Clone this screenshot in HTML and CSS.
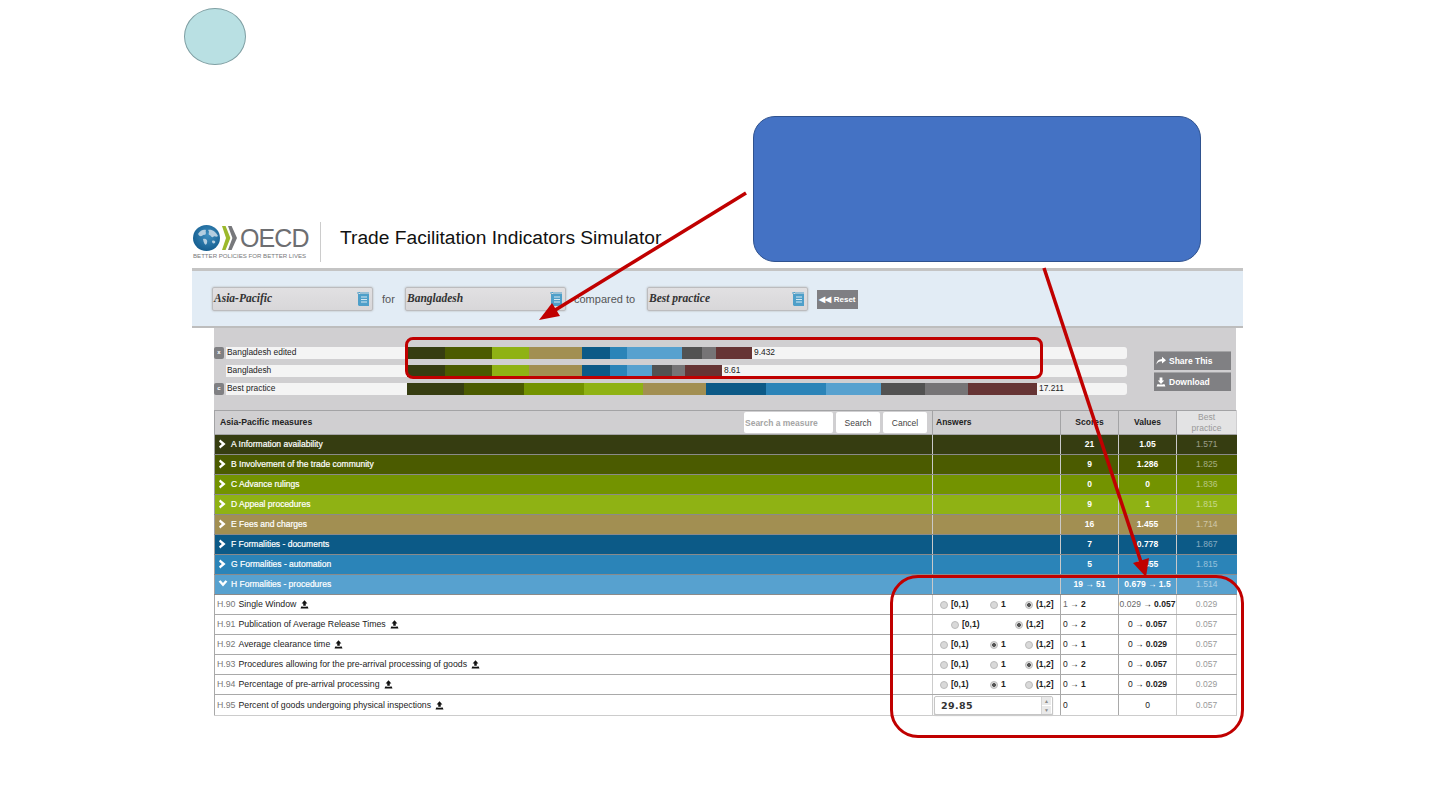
FILE: index.html
```html
<!DOCTYPE html>
<html lang="en">
<head>
  <meta charset="UTF-8">
  <meta name="viewport" content="width=device-width, initial-scale=1.0">
  <title>Trade Facilitation Indicators Simulator</title>
  <link rel="stylesheet" href="styles.css">
</head>
<body>

  <svg class="icon-defs" width="0" height="0">
    <symbol id="i-right" viewBox="0 0 10 10"><path d="M2.2 0.6 L7.6 5 L2.2 9.4 L1 7.4 L3.8 5 L1 2.6 Z" fill="#fff"/></symbol>
    <symbol id="i-down" viewBox="0 0 10 10"><path d="M0.6 2.4 L5 7.6 L9.4 2.4 L7.4 1.2 L5 4 L2.6 1.2 Z" fill="#fff"/></symbol>
    <symbol id="i-up" viewBox="0 0 10 10"><path d="M5 0.4 L8.2 3.8 H6.4 V6.4 H3.6 V3.8 H1.8 Z M1.4 7.2 H3 V7.4 H7 V7.2 H8.6 L9.4 9.4 H0.6 Z" fill="#111"/></symbol>
    <symbol id="i-dl" viewBox="0 0 10 10"><path d="M3.6 0.4 H6.4 V3.6 H8.2 L5 7 L1.8 3.6 H3.6 Z M1.4 7.2 H3 V7.4 H7 V7.2 H8.6 L9.4 9.4 H0.6 Z" fill="#fff"/></symbol>
    <symbol id="i-share" viewBox="0 0 10 10"><path d="M6 0.8 L10 4.2 L6 7.6 V5.4 C3.6 5.2 1.8 6 0.4 8.6 C0.6 5 2.6 3 6 2.9 Z" fill="#fff"/></symbol>
    <symbol id="i-doc" viewBox="0 0 14 15">
      <path d="M1 1 L3 1 L3 0 L4 1 L13 1" stroke="#4e9fc9" stroke-width="1" fill="none"/>
      <path d="M2 2 H13 V14 H3 L2 13 Z" fill="#4e9fc9"/>
      <path d="M5 5 H11 M5 7.5 H11 M5 10 H11" stroke="#d5e8f2" stroke-width="1"/>
    </symbol>
  </svg>

  <div class="slide">

    <header class="brand">
      <div class="logo">
        <div class="logo-mark">
          <svg class="globe" viewBox="0 0 27 26" width="27" height="26">
            <defs>
              <radialGradient id="sea" cx="0.55" cy="0.4" r="0.65">
                <stop offset="0" stop-color="#3f8fc0"/>
                <stop offset="1" stop-color="#125a8c"/>
              </radialGradient>
            </defs>
            <ellipse cx="13.5" cy="13" rx="13.5" ry="13" fill="url(#sea)"/>
            <path d="M5 9 C7 5 11 4 13 5 C12 7 14 8 12 10 C10 9 9 12 7 11 C6 11 6 10 5 9 Z M15 5 C19 4 23 7 25 11 C23 13 22 10 20 12 C18 13 18 10 16 10 C15 8 17 7 15 5 Z M10 14 C13 13 15 15 14 18 C13 21 11 20 10 14 Z M19 16 C21 15 23 16 22 18 C20 19 19 18 19 16 Z" fill="#b4cee0"/>
          </svg>
          <svg class="chevrons" viewBox="0 0 15 26" width="15" height="26">
            <path d="M0 1 L3.6 1 L8.4 13 L3.6 25 L0 25 L4 13 Z" fill="#9cb92c"/>
            <path d="M6 1 L9.6 1 L15 13 L9.6 25 L6 25 L10.4 13 Z" fill="#77787b"/>
          </svg>
          <span class="logo-name">OECD</span>
        </div>
        <div class="logo-tag">BETTER POLICIES FOR BETTER LIVES</div>
      </div>
      <h1>Trade Facilitation Indicators Simulator</h1>
    </header>

    <div class="filters">
      <div class="picker"><span>Asia-Pacific</span><svg class="doc"><use href="#i-doc"/></svg></div>
      <span class="filter-word word-for">for</span>
      <div class="picker"><span>Bangladesh</span><svg class="doc"><use href="#i-doc"/></svg></div>
      <span class="filter-word word-cmp">compared to</span>
      <div class="picker"><span>Best practice</span><svg class="doc"><use href="#i-doc"/></svg></div>
      <button class="reset">&#9664;&#9664; Reset</button>
    </div>

    <section class="chart">
      <div class="bars">
        <div class="bar-row">
          <span class="badge">x</span>
          <div class="track">
            <span class="bar-label">Bangladesh edited</span>
            <div class="segs">
              <i class="c-a" style="width:38px"></i><i class="c-b" style="width:47px"></i><i class="c-d" style="width:37px"></i><i class="c-e" style="width:53px"></i><i class="c-f" style="width:28px"></i><i class="c-g" style="width:17px"></i><i class="c-h" style="width:55px"></i><i class="c-i" style="width:20px"></i><i class="c-j" style="width:14px"></i><i class="c-k" style="width:36px"></i>
            </div>
            <span class="bar-value">9.432</span>
          </div>
        </div>
        <div class="bar-row">
          <span class="badge badge-empty"></span>
          <div class="track">
            <span class="bar-label">Bangladesh</span>
            <div class="segs">
              <i class="c-a" style="width:38px"></i><i class="c-b" style="width:47px"></i><i class="c-d" style="width:37px"></i><i class="c-e" style="width:53px"></i><i class="c-f" style="width:28px"></i><i class="c-g" style="width:17px"></i><i class="c-h" style="width:25px"></i><i class="c-i" style="width:20px"></i><i class="c-j" style="width:13px"></i><i class="c-k" style="width:37px"></i>
            </div>
            <span class="bar-value">8.61</span>
          </div>
        </div>
        <div class="bar-row">
          <span class="badge">c</span>
          <div class="track">
            <span class="bar-label">Best practice</span>
            <div class="segs">
              <i class="c-a" style="width:57px"></i><i class="c-b" style="width:60px"></i><i class="c-c" style="width:60px"></i><i class="c-d" style="width:59px"></i><i class="c-e" style="width:63px"></i><i class="c-f" style="width:60px"></i><i class="c-g" style="width:60px"></i><i class="c-h" style="width:55px"></i><i class="c-i" style="width:44px"></i><i class="c-j" style="width:43px"></i><i class="c-k" style="width:69px"></i>
            </div>
            <span class="bar-value">17.211</span>
          </div>
        </div>
      </div>
      <div class="actions">
        <button class="action"><svg class="ico"><use href="#i-share"/></svg>Share This</button>
        <button class="action"><svg class="ico"><use href="#i-dl"/></svg>Download</button>
      </div>
    </section>

    <table class="measures">
      <colgroup>
        <col class="col-name"><col class="col-ans"><col class="col-num"><col class="col-num"><col class="col-best">
      </colgroup>
      <thead>
        <tr>
          <th class="th-name">
            <div class="th-flex">
              <span>Asia-Pacific measures</span>
              <div class="search">
                <input type="text" placeholder="Search a measure">
                <button>Search</button>
                <button>Cancel</button>
              </div>
            </div>
          </th>
          <th class="th-ans">Answers</th>
          <th>Scores</th>
          <th>Values</th>
          <th class="th-best">Best practice</th>
        </tr>
      </thead>
      <tbody>
        <tr class="cat c-a"><td><svg class="ico"><use href="#i-right"/></svg>A Information availability</td><td></td><td>21</td><td>1.05</td><td class="faded">1.571</td></tr>
        <tr class="cat c-b"><td><svg class="ico"><use href="#i-right"/></svg>B Involvement of the trade community</td><td></td><td>9</td><td>1.286</td><td class="faded">1.825</td></tr>
        <tr class="cat c-c"><td><svg class="ico"><use href="#i-right"/></svg>C Advance rulings</td><td></td><td>0</td><td>0</td><td class="faded">1.836</td></tr>
        <tr class="cat c-d"><td><svg class="ico"><use href="#i-right"/></svg>D Appeal procedures</td><td></td><td>9</td><td>1</td><td class="faded">1.815</td></tr>
        <tr class="cat c-e"><td><svg class="ico"><use href="#i-right"/></svg>E Fees and charges</td><td></td><td>16</td><td>1.455</td><td class="faded">1.714</td></tr>
        <tr class="cat c-f"><td><svg class="ico"><use href="#i-right"/></svg>F Formalities - documents</td><td></td><td>7</td><td>0.778</td><td class="faded">1.867</td></tr>
        <tr class="cat c-g"><td><svg class="ico"><use href="#i-right"/></svg>G Formalities - automation</td><td></td><td>5</td><td>0.455</td><td class="faded">1.815</td></tr>
        <tr class="cat c-h"><td><svg class="ico"><use href="#i-down"/></svg>H Formalities - procedures</td><td></td><td>19 &rarr; 51</td><td>0.679 &rarr; 1.5</td><td class="faded">1.514</td></tr>

        <tr class="item">
          <td><span class="code">H.90</span>Single Window<svg class="ico up"><use href="#i-up"/></svg></td>
          <td class="answers"><div class="opts">
            <label><input type="radio" name="h90">[0,1)</label><label><input type="radio" name="h90">1</label><label><input type="radio" name="h90" checked>(1,2]</label>
          </div></td>
          <td class="score"><span class="old">1</span> &rarr; <b>2</b></td>
          <td class="value"><span class="old">0.029</span> &rarr; <b>0.057</b></td>
          <td class="best">0.029</td>
        </tr>
        <tr class="item">
          <td><span class="code">H.91</span>Publication of Average Release Times<svg class="ico up"><use href="#i-up"/></svg></td>
          <td class="answers"><div class="opts opts-two">
            <label><input type="radio" name="h91">[0,1)</label><label><input type="radio" name="h91" checked>(1,2]</label>
          </div></td>
          <td class="score">0 &rarr; <b>2</b></td>
          <td class="value">0 &rarr; <b>0.057</b></td>
          <td class="best">0.057</td>
        </tr>
        <tr class="item">
          <td><span class="code">H.92</span>Average clearance time<svg class="ico up"><use href="#i-up"/></svg></td>
          <td class="answers"><div class="opts">
            <label><input type="radio" name="h92">[0,1)</label><label><input type="radio" name="h92" checked>1</label><label><input type="radio" name="h92">(1,2]</label>
          </div></td>
          <td class="score">0 &rarr; <b>1</b></td>
          <td class="value">0 &rarr; <b>0.029</b></td>
          <td class="best">0.057</td>
        </tr>
        <tr class="item">
          <td><span class="code">H.93</span>Procedures allowing for the pre-arrival processing of goods<svg class="ico up"><use href="#i-up"/></svg></td>
          <td class="answers"><div class="opts">
            <label><input type="radio" name="h93">[0,1)</label><label><input type="radio" name="h93">1</label><label><input type="radio" name="h93" checked>(1,2]</label>
          </div></td>
          <td class="score">0 &rarr; <b>2</b></td>
          <td class="value">0 &rarr; <b>0.057</b></td>
          <td class="best">0.057</td>
        </tr>
        <tr class="item">
          <td><span class="code">H.94</span>Percentage of pre-arrival processing<svg class="ico up"><use href="#i-up"/></svg></td>
          <td class="answers"><div class="opts">
            <label><input type="radio" name="h94">[0,1)</label><label><input type="radio" name="h94" checked>1</label><label><input type="radio" name="h94">(1,2]</label>
          </div></td>
          <td class="score">0 &rarr; <b>1</b></td>
          <td class="value">0 &rarr; <b>0.029</b></td>
          <td class="best">0.029</td>
        </tr>
        <tr class="item item-last">
          <td><span class="code">H.95</span>Percent of goods undergoing physical inspections<svg class="ico up"><use href="#i-up"/></svg></td>
          <td class="answers answers-input">
            <div class="num">
              <input type="text" value="29.85">
              <span class="spin"><i>&#9650;</i><i>&#9660;</i></span>
            </div>
          </td>
          <td class="score">0</td>
          <td class="value">0</td>
          <td class="best">0.057</td>
        </tr>
      </tbody>
    </table>

    <!-- slide shapes drawn on top of the screenshot -->
    <div class="bubble"></div>
    <div class="callout"></div>
    <div class="ring ring-bars"></div>
    <div class="ring ring-answers"></div>
    <svg class="arrows" viewBox="0 0 1440 810" width="1440" height="810">
      <line x1="746" y1="193" x2="552" y2="312"/>
      <polygon points="539,320 552,303 560,316"/>
      <line x1="1044" y1="268" x2="1141" y2="562"/>
      <polygon points="1146,577 1133,563 1149,558"/>
    </svg>
  </div>

</body>
</html>
```

FILE: styles.css
```css
* {
  box-sizing: border-box;
}
html, body {
  margin: 0;
  background: #fff;
}
body {
  font-family: "Liberation Sans", Arial, sans-serif;
  color: #222;
}
.icon-defs {
  position: absolute;
}
.slide {
  position: relative;
  width: 1440px;
  height: 810px;
  padding: 222px 197px 0 192px;
  overflow: hidden;
}

/* header */
.brand {
  display: flex;
  align-items: flex-start;
  height: 46px;
}
.logo {
  width: 129px;
  height: 40px;
  padding: 3px 0 0 1px;
  border-right: 1px solid #ccc;
  margin-right: 19px;
}
.logo-mark {
  display: flex;
  align-items: center;
  height: 26px;
}
.chevrons {
  margin-left: 2px;
}
.logo-name {
  margin-left: 3px;
  font-size: 25px;
  line-height: 26px;
  letter-spacing: -0.9px;
  color: #6d6e71;
}
.logo-tag {
  margin-top: 1px;
  font-size: 6.1px;
  line-height: 8px;
  white-space: nowrap;
  color: #77787b;
}
h1 {
  margin: 5px 0 0;
  font-size: 19.2px;
  line-height: 22px;
  font-weight: normal;
  color: #111;
  white-space: nowrap;
}

/* filter band */
.filters {
  display: flex;
  align-items: center;
  height: 60px;
  padding: 1px 0 0 20px;
  background: #e2ecf5;
  border-top: 3px solid #c4c4c4;
  border-bottom: 2px solid #bdbdbd;
}
.picker {
  display: flex;
  align-items: center;
  justify-content: space-between;
  width: 161px;
  height: 24px;
  padding: 0 2px 2px 1px;
  background: linear-gradient(#e1e0e2, #d8d7d9);
  border: 1px solid #bcbcbe;
  border-radius: 2px;
  box-shadow: 0 0 2px #aaa;
  font: italic bold 11.5px "Liberation Serif", serif;
  color: #333;
}
.doc {
  width: 14px;
  height: 15px;
  margin-top: 2px;
}
.filter-word {
  font-size: 11px;
  color: #555;
}
.word-for {
  width: 32px;
  padding-left: 9px;
}
.word-cmp {
  width: 82px;
  padding-left: 8px;
  margin-right: -1px;
  white-space: nowrap;
}
.reset {
  width: 41px;
  height: 19px;
  margin-left: 9px;
  padding: 0;
  border: 0;
  background: #7f7f83;
  color: #fff;
  font: bold 8px "Liberation Sans", sans-serif;
  white-space: nowrap;
}

/* bar chart */
.chart {
  display: flex;
  justify-content: space-between;
  width: 1022px;
  height: 82px;
  margin-left: 22px;
  padding: 19px 5px 0 0;
  background: #d0cfd1;
}
.bars {
  display: flex;
  flex-direction: column;
  gap: 6.5px;
  width: 913px;
}
.bar-row {
  display: flex;
  align-items: stretch;
  height: 11.5px;
  gap: 2px;
}
.badge {
  flex: 0 0 10px;
  background: #808083;
  border-radius: 2px;
  color: #fff;
  font-size: 6px;
  font-weight: bold;
  line-height: 11px;
  text-align: center;
}
.badge-empty {
  background: none;
}
.track {
  display: flex;
  flex: 1;
  align-items: center;
  background: #f4f4f4;
  border-radius: 0 3px 3px 0;
  font-size: 8.4px;
  line-height: 11px;
  color: #222;
}
.bar-label {
  flex: 0 0 181px;
  padding-left: 1px;
}
.segs {
  display: flex;
  height: 100%;
}
.segs i {
  display: block;
  height: 100%;
}
.bar-value {
  margin-left: 2px;
}
.actions {
  display: flex;
  flex-direction: column;
  gap: 2px;
  padding-top: 4px;
}
.action {
  display: flex;
  align-items: center;
  width: 77px;
  height: 19px;
  padding: 0 0 0 2px;
  background: #808083;
  border: 0;
  border-top: 1px solid #a4a4a6;
  color: #fff;
  font: bold 8.5px "Liberation Sans", sans-serif;
}

/* shared category colours */
.c-a { background: #363d11; }
.c-b { background: #4b5b00; }
.c-c { background: #739300; }
.c-d { background: #8fb214; }
.c-e { background: #a28f52; }
.c-f { background: #0c5a87; }
.c-g { background: #2b84b8; }
.c-h { background: #57a1cf; }
.c-i { background: #525252; }
.c-j { background: #767476; }
.c-k { background: #663434; }

.ico {
  width: 10px;
  height: 10px;
  margin-right: 3px;
  flex: none;
  vertical-align: -2px;
}

/* table */
.measures {
  width: 1022px;
  margin-left: 22px;
  border-collapse: collapse;
  table-layout: fixed;
  font-size: 8.5px;
  line-height: 11px;
}
.col-name { width: 718px; }
.col-ans { width: 128px; }
.col-num { width: 58px; }
.col-best { width: 60px; }
.measures th {
  height: 24px;
  padding: 0;
  background: #d0cfd1;
  border: 1px solid #a3a3a5;
  font-weight: bold;
  color: #222;
  text-align: center;
}
.measures .th-name {
  padding: 0 5px 0 5px;
  border-right: 0;
  font-size: 8.7px;
  text-align: left;
}
.th-flex {
  display: flex;
  align-items: center;
  justify-content: space-between;
}
.search {
  display: flex;
  gap: 3px;
}
.search input,
.search button {
  height: 21px;
  padding: 0;
  background: #fff;
  border: 0;
  border-radius: 2px;
  font: 8.5px "Liberation Sans", sans-serif;
  color: #444;
}
.search input {
  width: 89px;
  padding-left: 1px;
}
.search input::placeholder {
  color: #a5a5a5;
  font-weight: bold;
}
.search button {
  width: 44px;
}
.measures .th-ans {
  padding-left: 3px;
  text-align: left;
}
.measures .th-best {
  padding: 0 10px;
  background: #e3e3e4;
  font-weight: normal;
  color: #999;
  border-right-color: #d0cfd1;
}

.cat td {
  height: 20px;
  padding: 0;
  border-bottom: 1px solid #8a8a8a;
  border-left: 1px solid #c9c9c9;
  color: #fff;
  font-weight: bold;
  text-align: center;
}
.cat td:first-child {
  padding-left: 3px;
  border-left: 1px solid #a3a3a5;
  font-weight: normal;
  -webkit-text-stroke: 0.2px #fff;
  text-align: left;
}
.cat .faded {
  font-weight: normal;
  color: rgba(255, 255, 255, 0.5);
}

.item td {
  height: 20px;
  padding: 0;
  background: #fff;
  border-bottom: 1px solid #a9a9a9;
  border-left: 1px solid #a9a9a9;
  text-align: center;
  color: #222;
}
.item td:first-child {
  padding-left: 2px;
  font-size: 8.75px;
  text-align: left;
}
.item-last td {
  height: 21px;
  border-bottom-color: #ccc;
}
.item .code {
  margin-right: 3px;
  color: #777;
}
.item .up {
  width: 9px;
  height: 9px;
  margin: 0 0 0 4px;
}
.item .answers {
  border-left-color: #ccc;
}
.item .score {
  padding-left: 2px;
  text-align: left;
}
.item .best {
  border-left-color: #ccc;
  border-right: 1px solid #ccc;
  color: #999;
}
.item .old {
  color: #666;
}
.opts {
  display: grid;
  grid-template-columns: 50px 35px auto;
  padding-left: 7px;
  text-align: left;
  font-weight: bold;
}
.opts-two {
  grid-template-columns: 64px auto;
  padding-left: 18px;
}
.opts label {
  display: flex;
  align-items: center;
  gap: 3px;
  white-space: nowrap;
}
.opts input {
  appearance: none;
  width: 8px;
  height: 8px;
  margin: 0;
  border: 1px solid #bbb;
  border-radius: 50%;
  background: #d9d9d9;
}
.opts input:checked {
  background: radial-gradient(circle, #555 0 1.6px, #d9d9d9 2.2px);
}
.item .answers-input {
  padding: 0;
  text-align: left;
}
.num {
  display: flex;
  width: 119px;
  height: 19px;
  margin-left: 1px;
  background: #fff;
  border: 1px solid #c6c6c6;
  border-radius: 2px;
  box-shadow: 0 1px 1px #bbb;
}
.num input {
  flex: 1;
  min-width: 0;
  padding: 0 0 0 6px;
  border: 0;
  background: none;
  font: bold 9.5px "DejaVu Sans", sans-serif;
  letter-spacing: 0.4px;
  color: #333;
}
.spin {
  display: flex;
  flex: 0 0 10px;
  flex-direction: column;
  margin-right: 1px;
  background: #e9e9e9;
  border-left: 1px solid #d4d4d4;
}
.spin i {
  flex: 1;
  font-style: normal;
  font-size: 5px;
  line-height: 8px;
  text-align: center;
  color: #8a8a8a;
}
.spin i + i {
  border-top: 1px solid #fff;
}

/* slide shapes */
.bubble {
  position: absolute;
  left: 184px;
  top: 8px;
  width: 62px;
  height: 57px;
  background: #b9e0e3;
  border: 1.5px solid #7f9fa3;
  border-radius: 50%;
}
.callout {
  position: absolute;
  left: 753px;
  top: 116px;
  width: 448px;
  height: 146px;
  background: #4472c4;
  border: 1px solid #2f528f;
  border-radius: 22px;
}
.ring {
  position: absolute;
  border: 3px solid #c00000;
}
.ring-bars {
  left: 405px;
  top: 337px;
  width: 638px;
  height: 42px;
  border-radius: 8px;
}
.ring-answers {
  left: 890px;
  top: 575px;
  width: 354px;
  height: 163px;
  border-radius: 28px;
}
.arrows {
  position: absolute;
  left: 0;
  top: 0;
  pointer-events: none;
}
.arrows line {
  stroke: #c00000;
  stroke-width: 3.5;
}
.arrows polygon {
  fill: #c00000;
}
```
